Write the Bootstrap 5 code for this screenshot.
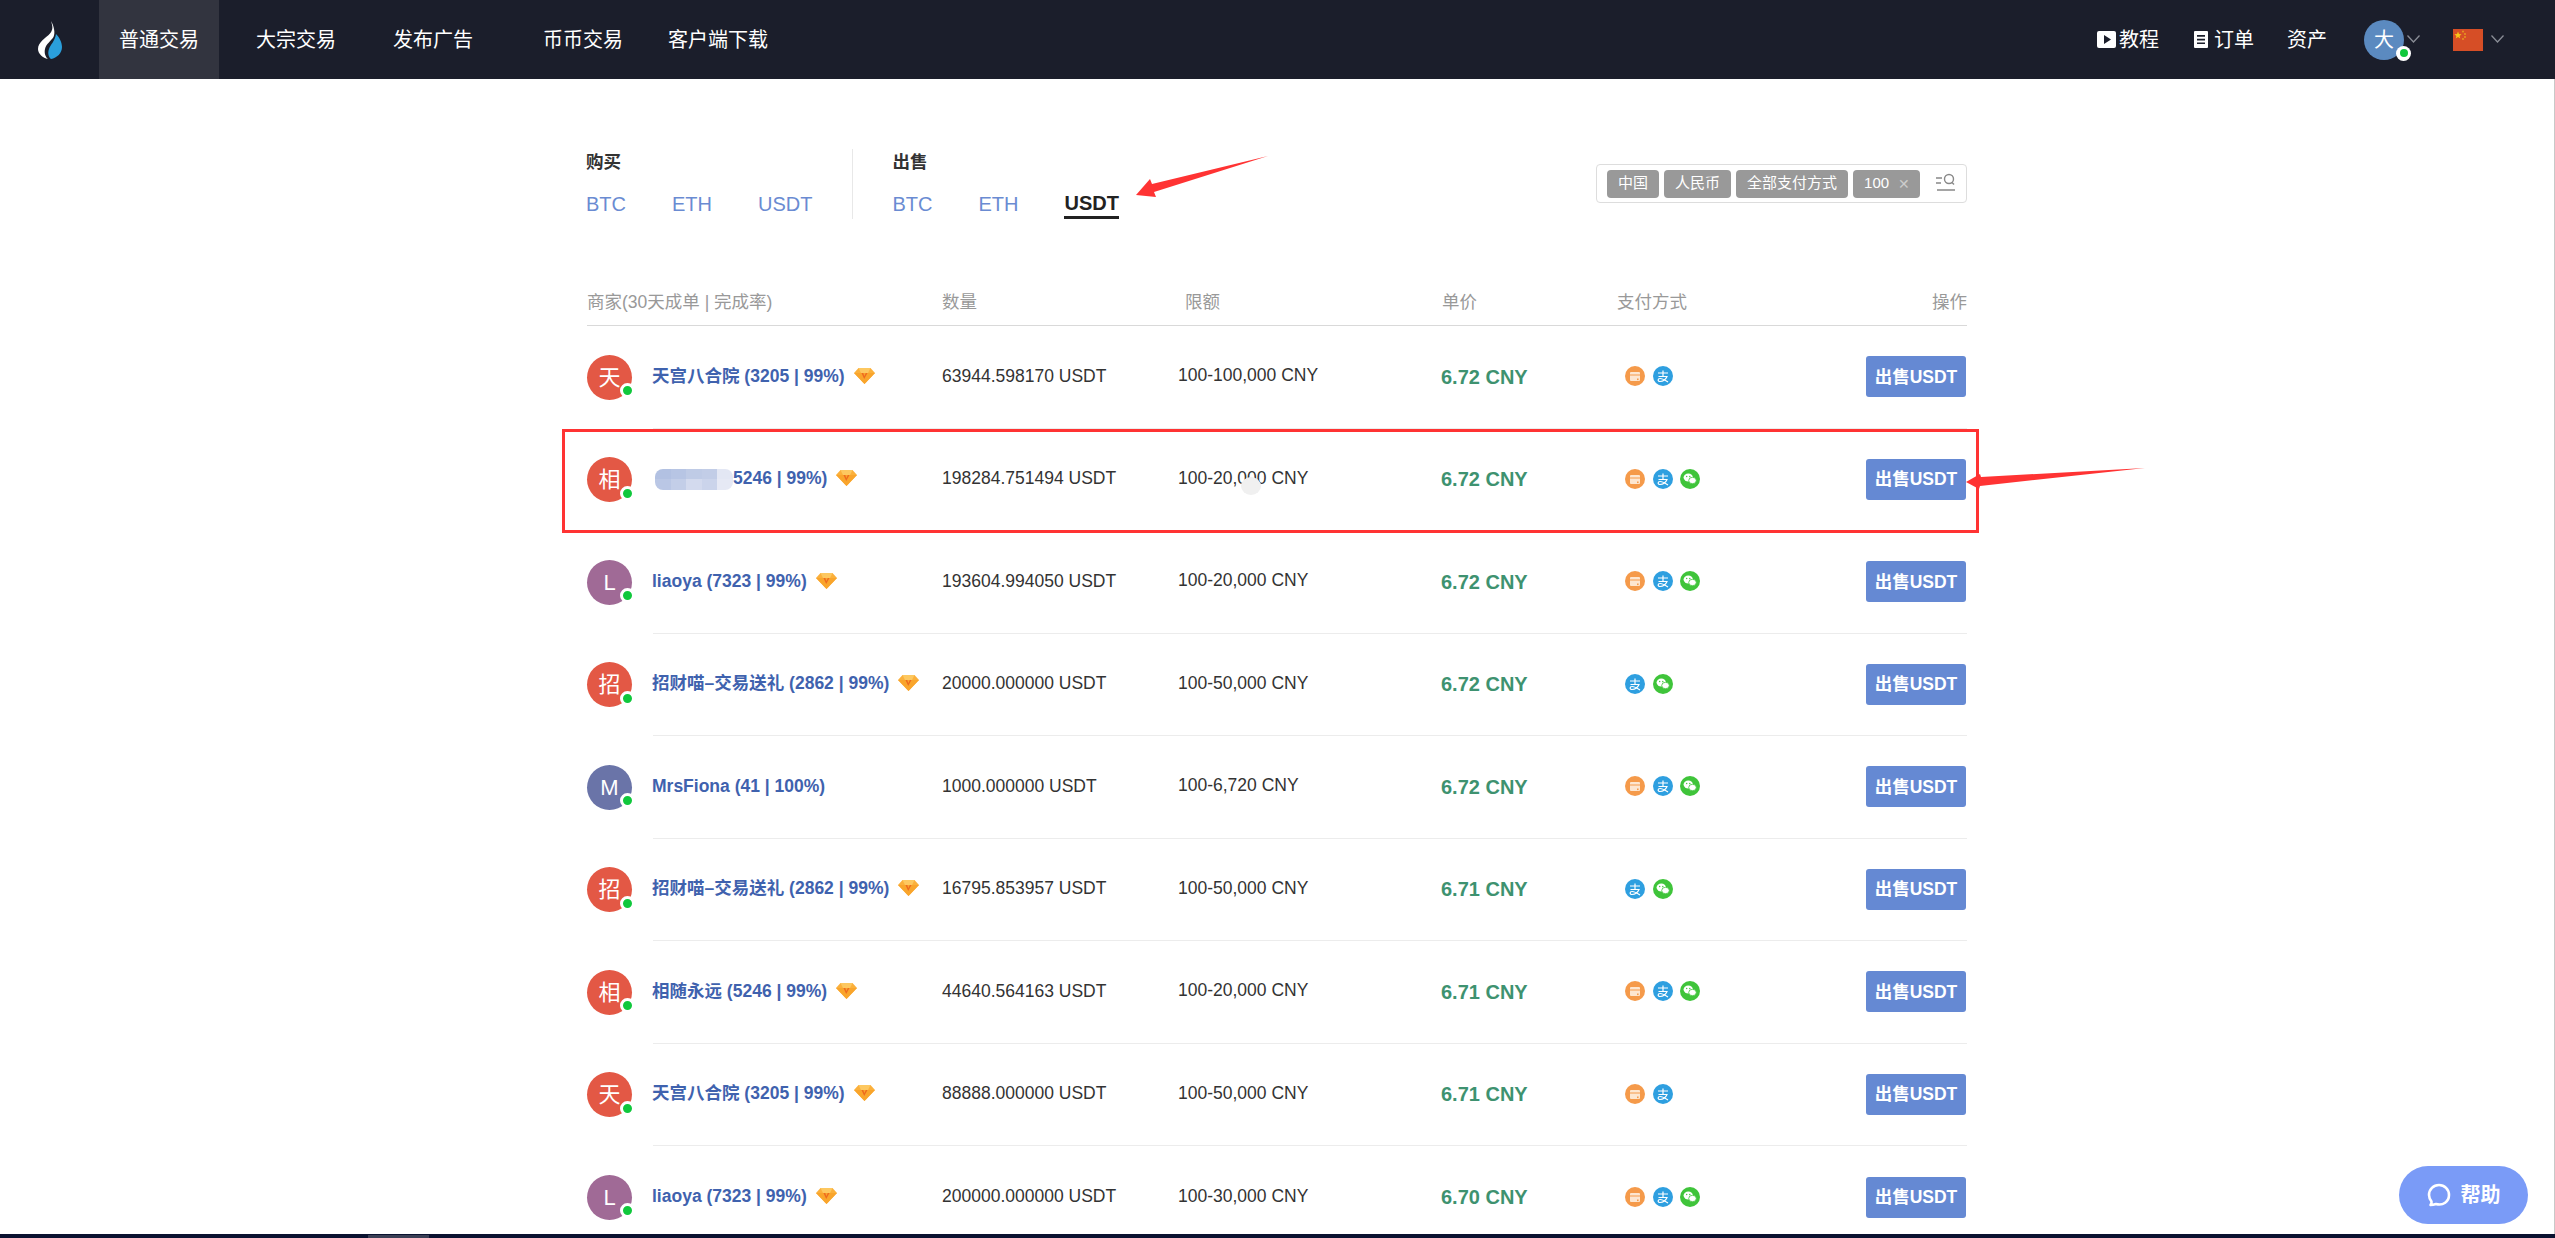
<!DOCTYPE html>
<html lang="zh-CN">
<head>
<meta charset="utf-8">
<title>OTC</title>
<link rel="stylesheet" href="https://cdn.jsdelivr.net/npm/bootstrap@5.3.0/dist/css/bootstrap.min.css">
<style>
html,body{height:1238px;overflow:hidden}
body{font-family:"Liberation Sans","Noto Sans CJK SC",sans-serif;background:#fff;color:#333;position:relative}
.topbar{height:79px;background:#1b1e2b;color:#fff;font-size:20px}
.logo-cell{width:99px}
.nav-cell{height:79px;color:#fff;text-decoration:none;display:flex;align-items:center}
.nav-active{background:#32343f;width:120px;justify-content:center}
.nav-a{margin-left:37px}.nav-b{margin-left:57px}.nav-c{margin-left:70px}.nav-d{margin-left:45px}
.right-nav{padding-right:51px}
.ic-gap{gap:3px}
.tut{margin-right:35px}.ord{margin-right:33px}.ast{margin-right:37px}
.user-ava{width:40px;height:40px;border-radius:50%;background:#5b8ac0;position:relative;font-size:20px}
.dot-top{position:absolute;right:-7px;bottom:-1px;width:15px;height:15px;border-radius:50%;background:#fff;display:flex;align-items:center;justify-content:center}
.dot-top::after{content:"";width:8px;height:8px;border-radius:50%;background:#10c83c}
.chev{margin-left:3px;margin-top:-2px}
.flag-wrap{margin-left:33px}
.main-wrap{width:1380px;margin-left:587px}
.tabs{height:201px;padding-top:70px}
.tab-group{height:70px;margin-left:-1px}
.tab-title{font-size:17.5px;font-weight:700;color:#333;line-height:24px;margin-top:1px}
.tab-links{margin-top:17px;font-size:20px;line-height:26px;gap:46px}
.tab-links a{color:#6a8bd2;text-decoration:none}
.tab-links a.on{color:#222;font-weight:700;border-bottom:3px solid #222;line-height:25px;height:28px}
.tab-sep{width:1px;background:#e8e8e8;margin:0 40px;height:70px;align-self:flex-start!important}
.filter-box{width:371px;height:39px;border:1px solid #ddd;border-radius:4px;padding:0 10px;margin-top:15px;gap:5px;background:#fff}
.chip-f{height:28px;padding:0 11px;background:#999;color:#fff;font-size:15px;border-radius:4px;white-space:nowrap;display:flex;align-items:center}
.chip-n{padding:0 10px 0 11px}
.chip-x{color:#ccc;margin-left:9px;line-height:1;font-size:14px}
.tb-head{height:46px;border-bottom:1px solid #d9d9d9;color:#999;font-size:17.5px;padding-bottom:10px}
.c1{width:355px}.c2{width:243px}.c3{width:257px}.c4{width:175px}
.b2{width:236px}.b3{width:263px}.b4{width:184px}
.rowx{height:102.5px}
.ava-cell{width:66px;flex:none}
.ava{width:45px;height:45px;border-radius:50%;color:#fff;font-size:22px;position:relative}
.ava::after{content:"";position:absolute;right:-2.5px;bottom:1.5px;width:15px;height:15px;border-radius:50%;background:#10c83c;border:3.75px solid #fff}
.c-red{background:#e35845}.c-pur{background:#a06a96}.c-sla{background:#6a74a8}
.row-body{flex:1;min-width:0;border-bottom:1px solid #ececec;position:relative;font-size:17.5px;color:#333}
.rowx:last-child .row-body{border-bottom:0}
.name-x{color:#3f62ae;font-weight:700;white-space:nowrap;display:flex;align-items:center;gap:9px;margin-top:-2px;margin-left:-1px;width:290px}
.b2{margin-top:-2px}
.lim{margin-top:-3px}
.price{font-size:20px;font-weight:700;color:#3e9270}
.pay{gap:7.5px;flex:1;margin-top:-1px}
.pay svg{display:block}
.sell-btn{width:100px;height:41px;background:#6589d3;color:#fff;font-size:17.5px;font-weight:700;border-radius:3px;border:0;padding:0;margin-right:1px;white-space:nowrap}
.blur-name{position:absolute;left:2px;top:40px;width:78px;height:21px;border-radius:8px;display:grid;grid-template-columns:repeat(5,1fr);overflow:hidden}
.blur-name i{display:block}
.blot{position:absolute;left:588px;top:48px;width:20px;height:18px;border-radius:50%;background:#f0f0f0}
.mark-box{position:absolute;left:562px;top:429px;width:1417px;height:104px;border:3px solid #f33;pointer-events:none}
.arrow-a{position:absolute;left:0;top:0;pointer-events:none}
.help-btn{position:absolute;left:2399px;top:1166px;width:129px;height:58px;border-radius:29px;background:#7a9bf7;color:#fff;font-size:20px;font-weight:700;gap:10px}
.edge-r{position:absolute;right:0;top:79px;bottom:0;width:1px;background:#c8c8c8}
.edge-b{position:absolute;left:0;right:0;bottom:0;height:4px;background:#0a1230}
.edge-c{position:absolute;left:368px;bottom:0;width:61px;height:3px;background:#3a3f55}
</style>
</head>
<body>
<nav class="topbar d-flex align-items-center">
  <div class="logo-cell d-flex justify-content-center align-items-center">
    <svg width="24" height="38" viewBox="0 0 24 38"><path d="M13 0c1.500 5 2.500 8-1 12.500C8 17 0 21 0 28c0 5 5 9 10 10-2.500-2-4-6-3-10 1-5 6-8 8.500-12 2-4 .5-11-2.500-16z" fill="#fff"/><path d="M18 13c3 3 6 8 6 13 0 6-5 11-11 12-2.500-2-3.500-6-2-10 1.200-4 6-8 7-15z" fill="#2a9fdc"/></svg>
  </div>
  <a class="nav-cell nav-active" href="#">普通交易</a>
  <a class="nav-cell nav-a" href="#">大宗交易</a>
  <a class="nav-cell nav-b" href="#">发布广告</a>
  <a class="nav-cell nav-c" href="#">币币交易</a>
  <a class="nav-cell nav-d" href="#">客户端下载</a>
  <div class="ms-auto d-flex align-items-center right-nav">
    <div class="d-flex align-items-center ic-gap tut">
      <svg width="19" height="17" viewBox="0 0 19 17"><rect width="19" height="17" rx="2" fill="#fff"/><path d="M7 4l7 4.500-7 4.500z" fill="#1b1e2b"/></svg><span>教程</span>
    </div>
    <div class="d-flex align-items-center ord" style="gap:6px">
      <svg width="14" height="17" viewBox="0 0 14 17"><rect width="14" height="17" rx="1" fill="#fff"/><path d="M3 4h8v1.700H3zM3 7.700h8v1.700H3zM3 11.400h8v1.700H3z" fill="#1b1e2b"/></svg><span>订单</span>
    </div>
    <span class="ast">资产</span>
    <div class="user-ava d-flex align-items-center justify-content-center">大<span class="dot-top"></span></div>
    <svg class="chev" width="13" height="8" viewBox="0 0 13 8"><path d="M.5.500l6 6.500 6-6.500" fill="none" stroke="#8a8d96" stroke-width="1.300"/></svg>
    <div class="flag-wrap d-flex align-items-center">
      <svg width="30" height="22" viewBox="0 0 30 22"><rect width="30" height="22" fill="#d64e26"/><path d="M5 2.500l1 2.500 2.600.2-2 1.700.7 2.600L5 8l-2.300 1.500.7-2.600-2-1.700L4 5z" fill="#f5c518"/><circle cx="10" cy="2.500" r=".9" fill="#e8a020"/><circle cx="12" cy="5" r=".9" fill="#e8a020"/><circle cx="12" cy="8" r=".9" fill="#e8a020"/><circle cx="10" cy="10" r=".9" fill="#e8a020"/></svg>
      <svg class="chev ms-2" width="13" height="8" viewBox="0 0 13 8"><path d="M.5.500l6 6.500 6-6.500" fill="none" stroke="#8a8d96" stroke-width="1.300"/></svg>
    </div>
  </div>
</nav>

<main class="main-wrap">
  <section class="tabs d-flex align-items-start">
    <div class="tab-group">
      <div class="tab-title">购买</div>
      <div class="tab-links d-flex"><a href="#">BTC</a><a href="#">ETH</a><a href="#">USDT</a></div>
    </div>
    <div class="tab-sep"></div>
    <div class="tab-group">
      <div class="tab-title">出售</div>
      <div class="tab-links d-flex"><a href="#">BTC</a><a href="#">ETH</a><a class="on" href="#">USDT</a></div>
    </div>
    <div class="filter-box ms-auto d-flex align-items-center">
      <span class="chip-f">中国</span><span class="chip-f">人民币</span><span class="chip-f">全部支付方式</span>
      <span class="chip-f chip-n">100<span class="chip-x">✕</span></span>
      <svg class="ms-auto" width="20" height="22" viewBox="0 0 20 22"><path d="M0 5h6M0 10h5M1 17h18" stroke="#888" stroke-width="1.400" fill="none"/><circle cx="13" cy="6" r="4.500" stroke="#888" stroke-width="1.400" fill="none"/><path d="M16 9.500l2 2" stroke="#888" stroke-width="1.400"/></svg>
    </div>
  </section>

  <div class="tb-head d-flex align-items-end">
    <div class="c1">商家(30天成单 | 完成率)</div><div class="c2">数量</div><div class="c3">限额</div><div class="c4">单价</div><div>支付方式</div><div class="ms-auto">操作</div>
  </div>
  <div id="rows"></div>
</main>

<div class="mark-box"></div>
<svg class="arrow-a" width="2555" height="1238" viewBox="0 0 2555 1238">
  <path d="M1268 156L1152 184l-2-5-14 16 20 2-2-5z" fill="#f33"/>
  <path d="M2145 468L1981 477l-1-3-14 8 13 7 1-3z" fill="#f33"/>
</svg>
<div class="help-btn d-flex align-items-center justify-content-center">
  <svg width="24" height="24" viewBox="0 0 24 24"><path d="M3.500 22c1 0 4-.5 5.500-1 7 2 13-2.500 13-9 0-5.500-4.500-10-10-10S2 6.500 2 12c0 2.500 1 4.500 2.500 6.500.3 1-.3 2.500-1 3.500z" fill="none" stroke="#fff" stroke-width="2.600" stroke-linejoin="round"/></svg>
  <span>帮助</span>
</div>
<div class="edge-r"></div>
<div class="edge-b"></div>
<div class="edge-c"></div>

<script>
const O='<svg width="20" height="20" viewBox="0 0 20 20"><circle cx="10" cy="10" r="10" fill="#f59a4a"/><rect x="5" y="6" width="10" height="9" rx="1" fill="#fde6d0"/><rect x="5" y="8.500" width="10" height="1" fill="#f59a4a"/><rect x="12" y="12.500" width="1.600" height="1.600" fill="#f59a4a"/></svg>';
const B='<svg width="20" height="20" viewBox="0 0 20 20"><circle cx="10" cy="10" r="10" fill="#2e9fe0"/><path d="M5 7h10M10 4.500V10M5.500 10.500H14c-1.500 3.500-4.500 5-7 5-2.500 0-2.500-3 0-3 2.500 0 5 1.500 8 3.500" fill="none" stroke="#fff" stroke-width="1.200"/></svg>';
const G='<svg width="20" height="20" viewBox="0 0 20 20"><circle cx="10" cy="10" r="10" fill="#3fc43a"/><ellipse cx="8.300" cy="8.500" rx="4.700" ry="4" fill="#fff"/><ellipse cx="12.500" cy="11.500" rx="3.800" ry="3.200" fill="#fff" stroke="#3fc43a" stroke-width=".8"/><circle cx="6.700" cy="7.500" r=".7" fill="#3fc43a"/><circle cx="9.800" cy="7.500" r=".7" fill="#3fc43a"/></svg>';
const D='<svg width="21" height="16" viewBox="0 0 21 16"><path d="M4.500 0h12L21 5 10.500 16 0 5z" fill="#fbb03b"/><path d="M0 5h21L10.500 16z" fill="#f9a52c"/><path d="M4.500 0L7 5h7l2.500-5z" fill="#fdc860"/><path d="M7.500 5l2.700 6 3.300-6h-1.700l-1.500 3.300L9.300 5z" fill="#ee6a1f"/></svg>';
const rows=[
['天','c-red','天宫八合院 (3205 | 99%)',1,'63944.598170','100-100,000','6.72',[O,B]],
['相','c-red','',1,'198284.751494','100-20,000','6.72',[O,B,G]],
['L','c-pur','liaoya (7323 | 99%)',1,'193604.994050','100-20,000','6.72',[O,B,G]],
['招','c-red','招财喵–交易送礼 (2862 | 99%)',1,'20000.000000','100-50,000','6.72',[B,G]],
['M','c-sla','MrsFiona (41 | 100%)',0,'1000.000000','100-6,720','6.72',[O,B,G]],
['招','c-red','招财喵–交易送礼 (2862 | 99%)',1,'16795.853957','100-50,000','6.71',[B,G]],
['相','c-red','相随永远 (5246 | 99%)',1,'44640.564163','100-20,000','6.71',[O,B,G]],
['天','c-red','天宫八合院 (3205 | 99%)',1,'88888.000000','100-50,000','6.71',[O,B]],
['L','c-pur','liaoya (7323 | 99%)',1,'200000.000000','100-30,000','6.70',[O,B,G]]];
const tiles=['#b2c1e2','#b7c5e4','#bfcbe6','#c2cde7','#e3e7f4','#bac7e5','#c3cee8','#d3daee','#cbd4eb','#e6e9f5'];
document.getElementById('rows').innerHTML=rows.map((r,i)=>{
  const blurred=i===1;
  const name=blurred?'<span style="padding-left:81px">5246 | 99%)</span>':`<span>${r[2]}</span>`;
  const extra=blurred?`<div class="blur-name">${tiles.map(c=>`<i style="background:${c}"></i>`).join('')}</div><div class="blot"></div>`:'';
  return `<div class="rowx d-flex">
  <div class="ava-cell d-flex align-items-center"><div class="ava ${r[1]} d-flex align-items-center justify-content-center">${r[0]}</div></div>
  <div class="row-body d-flex align-items-center">${extra}
    <div class="name-x">${name}${r[3]?D:''}</div>
    <div class="b2">${r[4]} USDT</div>
    <div class="b3 lim">${r[5]} CNY</div>
    <div class="b4 price">${r[6]} CNY</div>
    <div class="pay d-flex">${r[7].join('')}</div>
    <button class="sell-btn">出售USDT</button>
  </div></div>`;}).join('');
</script>
<script src="https://cdn.jsdelivr.net/npm/bootstrap@5.3.0/dist/js/bootstrap.bundle.min.js"></script>
</body>
</html>
